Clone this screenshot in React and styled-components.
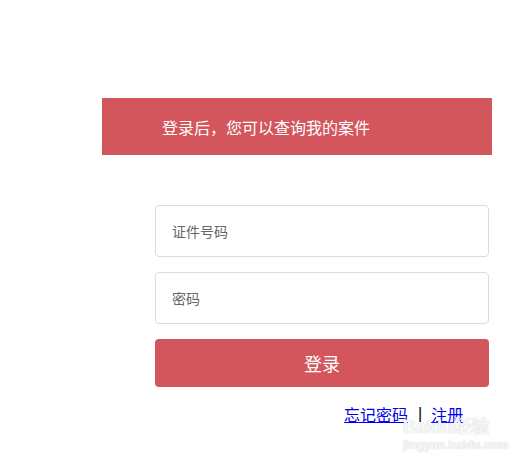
import React from "react";
import styled, { createGlobalStyle } from "styled-components";

const GlobalStyle = createGlobalStyle`
  html, body {
    margin: 0;
    padding: 0;
    background: #fff;
  }
  body {
    font-family: "Noto Sans CJK SC", "Noto Sans", sans-serif;
  }
`;

const Page = styled.div`
  position: relative;
  width: 527px;
  height: 461px;
  padding-top: 98px;
  box-sizing: border-box;
  overflow: hidden;
`;

const Banner = styled.div`
  margin-left: 102px;
  width: 390px;
  height: 57px;
  background: #d3565c;
  color: #fff;
  font-size: 16px;
  display: flex;
  align-items: center;
  padding-left: 60px;
  box-sizing: border-box;
`;

const Form = styled.form`
  margin: 50px 0 0 155px;
  width: 334px;
  display: flex;
  flex-direction: column;
  gap: 15px;
`;

const Input = styled.input`
  box-sizing: border-box;
  width: 100%;
  height: 52px;
  border: 1px solid #dcdcdc;
  border-radius: 4px;
  padding: 0 16px;
  font-family: inherit;
  font-size: 14px;
  color: #333;
  outline: none;

  &::placeholder {
    color: #666;
  }
`;

const Submit = styled.button`
  height: 48px;
  border: none;
  border-radius: 4px;
  background: #d3565c;
  color: #fff;
  font-family: inherit;
  font-size: 18px;
  cursor: pointer;
`;

const Links = styled.div`
  display: flex;
  align-items: center;
  margin: 17px 0 0 344px;
  font-size: 16px;
  line-height: 20px;
`;

const Link = styled.a`
  color: #0000ee;
  text-decoration: underline;
`;

const Divider = styled.span`
  color: #000;
  margin: 0 9px 0 10px;
  font-family: "Liberation Sans", Arial, sans-serif;
`;

/* faint screenshot watermark sitting over the links */
const Watermark = styled.div`
  position: absolute;
  left: 403px;
  top: 418px;
  color: #f7f7f7;
  text-shadow: 0 0 1px #d6d6d6, 0 0 1px #d6d6d6;
  font-family: "Liberation Sans", Arial, "Noto Sans CJK SC", sans-serif;
  pointer-events: none;
  line-height: 1;
`;

const MarkTitle = styled.div`
  font-size: 18px;
  font-weight: bold;
`;

const MarkUrl = styled.div`
  font-size: 12px;
  margin-top: 3px;
  font-weight: bold;
`;

export default function App() {
  return (
    <>
      <GlobalStyle />
      <Page>
        <Banner>登录后，您可以查询我的案件</Banner>
        <Form onSubmit={(e) => e.preventDefault()}>
          <Input type="text" placeholder="证件号码" />
          <Input type="password" placeholder="密码" />
          <Submit type="submit">登录</Submit>
        </Form>
        <Links>
          <Link href="#">忘记密码</Link>
          <Divider>|</Divider>
          <Link href="#">注册</Link>
        </Links>
        <Watermark>
          <MarkTitle>Baidu经验</MarkTitle>
          <MarkUrl>jingyan.baidu.com</MarkUrl>
        </Watermark>
      </Page>
    </>
  );
}
